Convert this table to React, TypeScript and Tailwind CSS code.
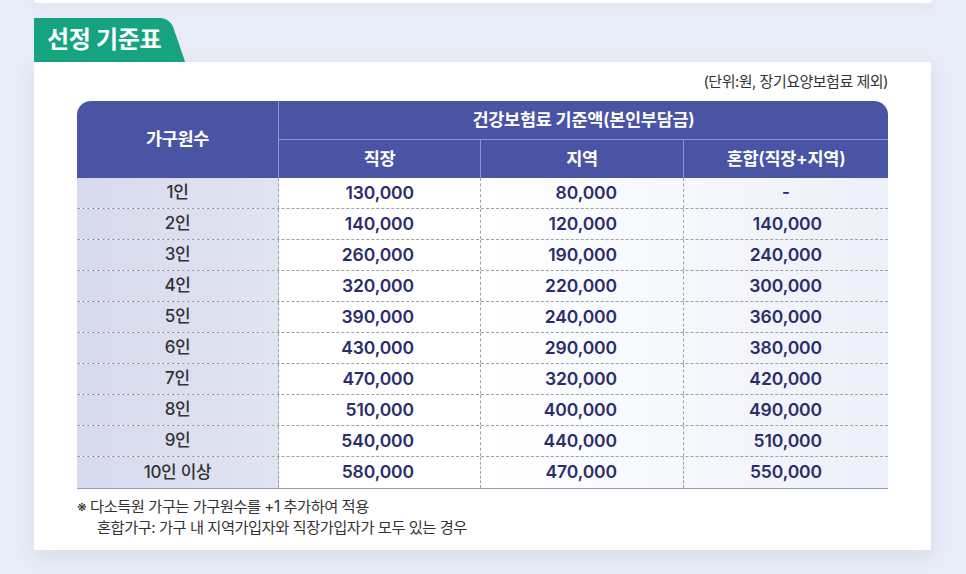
import React from "react";

const rows: [string, string, string, string][] = [
  ["1인", "130,000", "80,000", "-"],
  ["2인", "140,000", "120,000", "140,000"],
  ["3인", "260,000", "190,000", "240,000"],
  ["4인", "320,000", "220,000", "300,000"],
  ["5인", "390,000", "240,000", "360,000"],
  ["6인", "430,000", "290,000", "380,000"],
  ["7인", "470,000", "320,000", "420,000"],
  ["8인", "510,000", "400,000", "490,000"],
  ["9인", "540,000", "440,000", "510,000"],
  ["10인 이상", "580,000", "470,000", "550,000"],
];

const font = "font-['Inter','Noto_Sans_CJK_KR',sans-serif]";

function NumCell({ value, last }: { value: string; last?: boolean }) {
  if (value === "-") {
    return (
      <div className="flex items-center justify-center text-[17px] font-semibold text-[#2b2d6b]">
        -
      </div>
    );
  }
  return (
    <div
      className={`flex items-center justify-end pr-[66px] text-[17.5px] font-semibold tracking-[-0.1px] text-[#2b2d6b] ${
        last ? "" : "border-r border-dashed border-[#9ea0a8]"
      }`}
    >
      {value}
    </div>
  );
}

export default function App() {
  return (
    <div className={`min-h-[574px] w-full bg-[#e8ecf6] ${font}`}>
      {/* bottom edge of previous card */}
      <div className="mx-[34px] h-[3px] w-[898px] rounded-b-[4px] bg-white shadow-[0_2px_8px_rgba(70,90,150,0.10)]" />

      <div className="ml-[34px] mt-[15px] w-[897px]">
        {/* green tab */}
        <div className="relative h-[44px] w-[151px]">
          <div className="absolute inset-y-0 left-0 right-[30px] bg-[#15a47f]" />
          <div className="absolute inset-y-0 right-[15px] w-[40px] origin-top skew-x-[19deg] rounded-tr-[9px] bg-[#15a47f]" />
          <span className="relative flex h-full items-center pl-[13px] text-[24px] font-bold tracking-[-0.3px] text-white">
            선정 기준표
          </span>
        </div>

        {/* card */}
        <div className="bg-white px-[43px] pb-[12px] pt-[10px] shadow-[0_6px_18px_rgba(60,80,140,0.10)]">
          <div className="text-right text-[15px] leading-[20px] tracking-[-0.5px] text-[#333]">
            (단위:원, 장기요양보험료 제외)
          </div>

          <div className="mt-[9px] w-[811px]">
            {/* header */}
            <div className="grid h-[77px] grid-cols-[202px_202px_203px_1fr] grid-rows-[39px_38px] overflow-hidden rounded-t-[14px] bg-[#4a54a4] text-[17.5px] font-semibold tracking-[-0.3px] text-white">
              <div className="row-span-2 flex items-center justify-center border-r border-[#8e96d0]">
                가구원수
              </div>
              <div className="col-span-3 flex items-center justify-center border-b border-[#8e96d0]">
                건강보험료 기준액(본인부담금)
              </div>
              <div className="flex items-center justify-center border-r border-[#8e96d0]">직장</div>
              <div className="flex items-center justify-center border-r border-[#8e96d0]">지역</div>
              <div className="flex items-center justify-center">혼합(직장+지역)</div>
            </div>

            {/* body */}
            <div className="border-b-[1.5px] border-[#9a9cae]">
              {rows.map((r, i) => (
                <div
                  key={r[0]}
                  className={`grid h-[31px] grid-cols-[202px_202px_203px_1fr] bg-gradient-to-r from-white via-white to-[#edf0f9] ${
                    i < rows.length - 1 ? "border-b border-dashed border-[#9ea0a8]" : ""
                  }`}
                >
                  <div className="flex items-center justify-center border-r border-dashed border-[#9ea0a8] bg-gradient-to-r from-[#d6daed] to-[#e1e4f1] text-[17px] font-medium tracking-[-0.3px] text-[#333]">
                    {r[0]}
                  </div>
                  <NumCell value={r[1]} />
                  <NumCell value={r[2]} />
                  <NumCell value={r[3]} last />
                </div>
              ))}
            </div>
          </div>

          {/* footnote */}
          <div className="mt-[7px] text-[15.3px] leading-[21px] tracking-[-0.5px] text-[#333]">
            <div>※ 다소득원 가구는 가구원수를 +1 추가하여 적용</div>
            <div className="pl-[20px]">혼합가구: 가구 내 지역가입자와 직장가입자가 모두 있는 경우</div>
          </div>
        </div>
      </div>
    </div>
  );
}
